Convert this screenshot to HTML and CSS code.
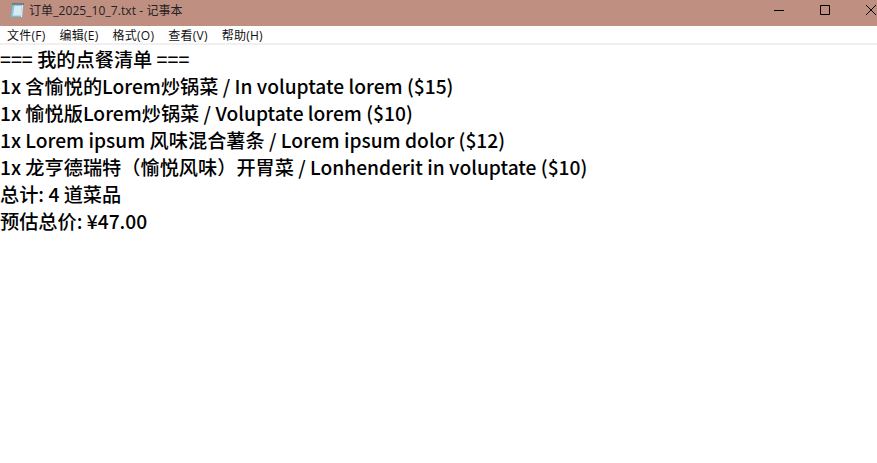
FILE: index.html
```html
<!DOCTYPE html>
<html>
<head>
<meta charset="utf-8">
<title>订单_2025_10_7.txt - 记事本</title>
<link rel="stylesheet" href="styles.css">
</head>
<body>

<div class="titlebar">
    <svg class="app-icon" width="16" height="16" viewBox="0 0 16 16">
        <path d="M3.500 1.500h10.500l-1 13.500H1.500z" fill="#8fc6d8" stroke="#8aa4ac" stroke-width="1"/>
        <path d="M5.500 4h7l-.7 9.500H4z" fill="#d5ecf2"/>
        <path d="M13.500 3l-1 12" stroke="#f4f8f8" stroke-width="1"/>
        <path d="M4 1v2M6 1v2M8 1v2M10 1v2M12 1v2M14 1v2" stroke="#46565c" stroke-width="1"/>
    </svg>
    <span class="title">订单_2025_10_7.txt - 记事本</span>
    <div class="controls">
        <div class="control">
            <svg width="10" height="10" viewBox="0 0 10 10"><path d="M0 5.500h10" stroke="#000" stroke-width="1"/></svg>
        </div>
        <div class="control">
            <svg width="10" height="10" viewBox="0 0 10 10"><path d="M.5.500h9v9h-9z" fill="none" stroke="#000" stroke-width="1"/></svg>
        </div>
        <div class="control">
            <svg width="10" height="10" viewBox="0 0 10 10"><path d="M0 0l10 10M10 0L0 10" stroke="#000" stroke-width="1"/></svg>
        </div>
    </div>
</div>

<div class="menubar">
    <span class="menu">文件(F)</span>
    <span class="menu">编辑(E)</span>
    <span class="menu">格式(O)</span>
    <span class="menu">查看(V)</span>
    <span class="menu">帮助(H)</span>
</div>

<div class="editor">
    <p>=== 我的点餐清单 ===</p>
    <p>1x 含愉悦的Lorem炒锅菜 / In voluptate lorem ($15)</p>
    <p>1x 愉悦版Lorem炒锅菜 / Voluptate lorem ($10)</p>
    <p>1x Lorem ipsum 风味混合薯条 / Lorem ipsum dolor ($12)</p>
    <p>1x 龙亨德瑞特（愉悦风味）开胃菜 / Lonhenderit in voluptate ($10)</p>
    <p>总计: 4 道菜品</p>
    <p>预估总价: ¥47.00</p>
</div>

</body>
</html>
```

FILE: styles.css
```css
html, body {
  margin: 0;
  padding: 0;
  height: 100%;
  background: #fff;
  overflow: hidden;
}
body {
  display: flex;
  flex-direction: column;
  font-family: "Noto Sans CJK SC", "Noto Sans", sans-serif;
}
.titlebar {
  height: 20px;
  padding: 0 0 6px 9px;
  background: #bf8f82;
  display: flex;
  align-items: center;
  flex-shrink: 0;
}
.app-icon {
  margin-right: 4px;
}
.title {
  font-family: "Open Sans", "Noto Sans CJK SC", sans-serif;
  font-size: 12px;
  letter-spacing: .08px;
  color: #222;
}
.controls {
  margin-left: auto;
  margin-right: -17px;
  display: flex;
  height: 100%;
}
.control {
  width: 46px;
  display: flex;
  align-items: center;
  justify-content: center;
}
.menubar {
  height: 17px;
  padding-left: 2px;
  display: flex;
  align-items: center;
  font-family: "Open Sans", "Noto Sans CJK SC", sans-serif;
  font-size: 12px;
  letter-spacing: .25px;
  color: #111;
  border-bottom: 2px solid #f0f0f0;
  flex-shrink: 0;
}
.menu {
  padding: 0 5px;
  margin-right: 4px;
}
.editor {
  flex: 1;
  padding-top: 1px;
  font-size: 19.2px;
  font-weight: 500;
  line-height: 27px;
  color: #000;
}
.editor p {
  margin: 0;
}
```
